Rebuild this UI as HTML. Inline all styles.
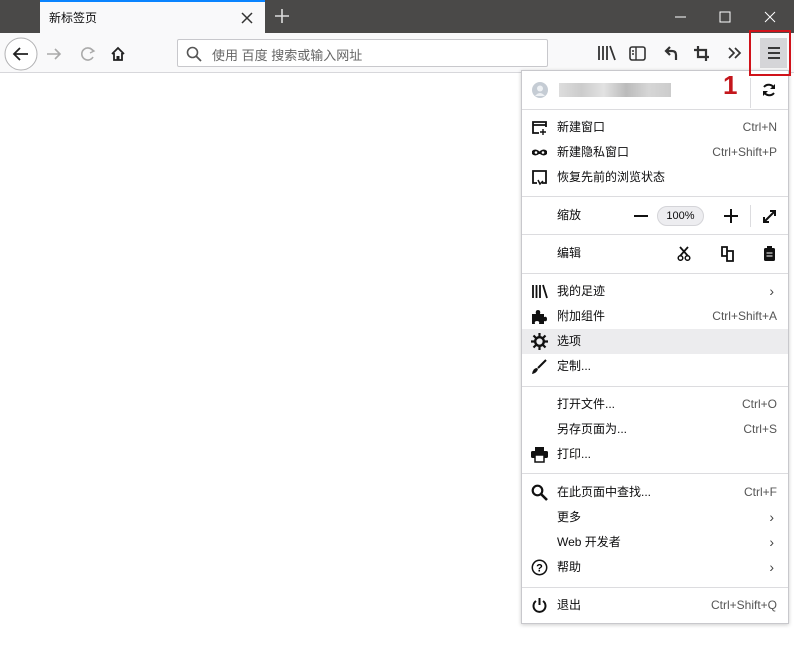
<!DOCTYPE html>
<html><head><meta charset="utf-8"><style>
*{margin:0;padding:0;box-sizing:border-box}
body{width:794px;height:647px;overflow:hidden;background:#fff;font-family:"Liberation Sans","Noto Sans CJK SC",sans-serif;font-size:12px;color:#0c0c0d;position:relative}
.abs{position:absolute}
#title{left:0;top:0;width:794px;height:33px;background:#4a4948}
#tab{left:40px;top:0;width:225px;height:33px;background:#f9f9fa;border-top:2px solid #0a84ff}
#tb{left:0;top:33px;width:794px;height:40px;background:#f9f9fa;border-bottom:1px solid #d7d7db}
#url{left:177px;top:39px;width:371px;height:28px;background:#fff;border:1px solid #c8c8cc;border-radius:2px}
#panel{left:521px;top:70px;width:268px;height:554px;background:#fff;border:1px solid #c8c8cc;box-shadow:0 1px 4px rgba(0,0,0,.2)}
.sep{position:absolute;left:0;width:266px;height:1px;background:#dcdcdf}
.row{position:absolute;left:0;width:266px;height:25px;line-height:25px}
.row .t{position:absolute;left:35px}
.row .k{position:absolute;right:11px;color:#555}
.row .ic{position:absolute;left:9px;top:4px;width:17px;height:17px}
.chev{position:absolute;right:14px;color:#444;font-size:14px}
</style></head><body>
<div class="abs" id="title"></div>
<div class="abs" id="tab"><span class="abs" style="left:9px;top:7px;font-size:12px">新标签页</span>
<svg class="abs" style="left:201px;top:10px" width="12" height="12"><path d="M1 1L11 11M11 1L1 11" stroke="#333" stroke-width="1.5"/></svg></div>
<svg class="abs" style="left:274px;top:8px" width="16" height="16"><path d="M8 1V15M1 8H15" stroke="#ddd" stroke-width="1.6"/></svg>
<svg class="abs" style="left:674px;top:10px" width="110" height="14"><path d="M1 7H12" stroke="#fff"/><path d="M46 2h10v10h-10z" fill="none" stroke="#fff"/><path d="M91 2L101 12M101 2L91 12" stroke="#fff"/></svg>
<div class="abs" id="tb"></div>
<svg class="abs" style="left:4px;top:37px" width="130" height="34">
<circle cx="17" cy="17" r="16" fill="#fff" stroke="#b1b1b3"/>
<path d="M10 17H24M16 11L10 17L16 23" fill="none" stroke="#222" stroke-width="1.8"/>
<path d="M43 17H56M51 12L56 17L51 22" fill="none" stroke="#aaa" stroke-width="1.6"/>
<path d="M89 14A6 6 0 1 0 89 20" fill="none" stroke="#aaa" stroke-width="1.6"/><path d="M86 11L90 14L86 16" fill="none" stroke="#aaa" stroke-width="1.4"/>
<path d="M108 17L114 11L120 17M110 16V23H118V16" fill="none" stroke="#222" stroke-width="1.8"/><rect x="112.5" y="19" width="3" height="4" fill="#222"/>
</svg>
<div class="abs" id="url"><svg class="abs" style="left:8px;top:6px" width="16" height="16"><circle cx="6.5" cy="6.5" r="5" fill="none" stroke="#555" stroke-width="1.6"/><path d="M10 10L15 15" stroke="#555" stroke-width="1.8"/></svg><span class="abs" style="left:34px;top:5px;color:#666;font-size:13px">使用 百度 搜索或输入网址</span></div>
<svg class="abs" style="left:596px;top:42px" width="155" height="22">
<path d="M3 4V18M7 4V18M11 4V18M14 4L19 18" stroke="#333" stroke-width="1.8" fill="none"/>
<rect x="34" y="5" width="15" height="13" rx="2" fill="none" stroke="#333" stroke-width="1.6"/><path d="M40 5V18M36 9H38M36 12H38" stroke="#333" stroke-width="1.4"/>
<path d="M80 18V13Q80 9 76 9H70M74 5L70 9L74 13" fill="none" stroke="#333" stroke-width="2.2"/>
<path d="M102 4V15H113M98 8H110V19" fill="none" stroke="#333" stroke-width="2.2"/>
<path d="M133 6L138 11L133 16M139 6L144 11L139 16" fill="none" stroke="#333" stroke-width="1.7"/>
</svg>
<div class="abs" style="left:760px;top:38px;width:27px;height:30px;background:#d5d5d8"></div>
<svg class="abs" style="left:766px;top:45px" width="16" height="16"><path d="M2 3H14M2 8H14M2 13H14" stroke="#222" stroke-width="1.8"/></svg>
<div class="abs" id="panel">
<svg class="abs" style="left:10px;top:11px" width="16" height="16"><circle cx="8" cy="8" r="8" fill="#c5ccd4"/><circle cx="8" cy="6.5" r="3" fill="#eef1f4"/><path d="M3 14Q8 8 13 14" fill="#eef1f4"/></svg>
<div class="abs" style="left:37px;top:12px;width:112px;height:14px;background:linear-gradient(90deg,#ddd,#ccc 20%,#e2e2e2 40%,#bbb 60%,#d6d6d6 80%,#ccc)"></div>
<span class="abs" style="left:201px;top:-1px;color:#c4161c;font-size:26px;font-weight:bold">1</span>
<div class="abs" style="left:228px;top:7px;width:1px;height:30px;background:#dcdcdf"></div>
<svg class="abs" style="left:239px;top:11px" width="16" height="16"><path d="M13 6A6 6 0 0 0 3 5M3 10A6 6 0 0 0 13 11" fill="none" stroke="#111" stroke-width="2"/><path d="M14 2V7H9M2 14V9H7" fill="#111"/></svg>
<div class="sep" style="top:38px"></div>
<div class="row" style="top:44px"><svg class="ic" viewBox="0 0 17 17"><path d="M8 14H2V3H15V8M2 6H15" fill="none" stroke="#111" stroke-width="1.8"/><path d="M12 10V16M9 13H15" stroke="#111" stroke-width="1.4"/></svg><span class="t">新建窗口</span><span class="k">Ctrl+N</span></div>
<div class="row" style="top:69px"><svg class="ic" viewBox="0 0 17 17"><path d="M1 7Q4 4 8 7Q9 8 9 7Q13 4 16 7V10Q13 13 9 10H8Q4 13 1 10Z" fill="#111"/><circle cx="5" cy="8.5" r="1.3" fill="#fff"/><circle cx="12" cy="8.5" r="1.3" fill="#fff"/></svg><span class="t">新建隐私窗口</span><span class="k">Ctrl+Shift+P</span></div>
<div class="row" style="top:94px"><svg class="ic" viewBox="0 0 17 17"><path d="M6 14H2V2H15V14H11" fill="none" stroke="#111" stroke-width="1.8"/><path d="M7 11L9 15L12 12" fill="none" stroke="#111" stroke-width="1.5"/></svg><span class="t">恢复先前的浏览状态</span></div>
<div class="sep" style="top:125px"></div>
<div class="row" style="top:132px"><span class="t">缩放</span>
<svg class="abs" style="left:112px;top:12px" width="14" height="2"><rect width="14" height="2" fill="#111"/></svg>
<div class="abs" style="left:135px;top:3px;width:47px;height:20px;border-radius:10px;background:#ededf0;border:1px solid #d4d4d8;text-align:center;line-height:18px;font-size:11px">100%</div>
<svg class="abs" style="left:202px;top:6px" width="14" height="14"><path d="M7 0V14M0 7H14" stroke="#111" stroke-width="2"/></svg>
<div class="abs" style="left:228px;top:2px;width:1px;height:22px;background:#dcdcdf"></div>
<svg class="abs" style="left:240px;top:6px" width="15" height="15"><path d="M2 13L13 2M8 2H13V7M2 8V13H7" fill="none" stroke="#111" stroke-width="2"/></svg></div>
<div class="sep" style="top:163px"></div>
<div class="row" style="top:170px"><span class="t">编辑</span>
<svg class="abs" style="left:155px;top:5px" width="14" height="15"><path d="M3 1L11 10M11 1L3 10" stroke="#111" stroke-width="1.8"/><circle cx="3.5" cy="12" r="2.3" fill="none" stroke="#111" stroke-width="1.5"/><circle cx="10.5" cy="12" r="2.3" fill="none" stroke="#111" stroke-width="1.5"/></svg>
<svg class="abs" style="left:198px;top:5px" width="15" height="16"><path d="M2 1H7V10H2Z M7 5H13V15H7Z" fill="none" stroke="#111" stroke-width="1.8"/></svg>
<svg class="abs" style="left:241px;top:4px" width="13" height="17"><rect x="1" y="3" width="11" height="13" rx="1.5" fill="#111"/><rect x="4" y="1" width="5" height="3" fill="#111"/><path d="M3.5 8H9.5M3.5 11H9.5" stroke="#fff"/></svg></div>
<div class="sep" style="top:202px"></div>
<div class="row" style="top:208px"><svg class="ic" viewBox="0 0 17 17"><path d="M2 2V15M5.5 2V15M9 2V15M12 2L16 15" stroke="#111" stroke-width="1.8"/></svg><span class="t">我的足迹</span><span class="chev">›</span></div>
<div class="row" style="top:233px"><svg class="ic" viewBox="0 0 17 17"><path d="M1 6H5Q4 2 7 2Q10 2 9 6H13V9Q16 8 16 11Q16 14 13 13V16H8Q9 13 6 13Q3 13 4 16H1Z" fill="#111"/></svg><span class="t">附加组件</span><span class="k">Ctrl+Shift+A</span></div>
<div class="row" style="top:258px;background:#ececee"><svg class="ic" viewBox="0 0 17 17"><circle cx="8.5" cy="8.5" r="4.3" fill="none" stroke="#111" stroke-width="2.4"/><path d="M8.5 0V4M8.5 13V17M0 8.5H4M13 8.5H17M2.5 2.5L5 5M12 12L14.5 14.5M14.5 2.5L12 5M5 12L2.5 14.5" stroke="#111" stroke-width="2.2"/></svg><span class="t">选项</span></div>
<div class="row" style="top:283px"><svg class="ic" viewBox="0 0 17 17"><path d="M15 2L7 10" stroke="#111" stroke-width="2"/><path d="M6 10Q2 10 1 16Q6 15 7 11Z" fill="#111"/></svg><span class="t">定制...</span></div>
<div class="sep" style="top:315px"></div>
<div class="row" style="top:321px"><span class="t">打开文件...</span><span class="k">Ctrl+O</span></div>
<div class="row" style="top:346px"><span class="t">另存页面为...</span><span class="k">Ctrl+S</span></div>
<div class="row" style="top:371px"><svg class="ic" viewBox="0 0 17 17"><rect x="4" y="1" width="9" height="4" fill="#111"/><rect x="0" y="5" width="17" height="7" rx="1.5" fill="#111"/><rect x="4" y="9" width="9" height="7" fill="#fff" stroke="#111" stroke-width="1.5"/></svg><span class="t">打印...</span></div>
<div class="sep" style="top:402px"></div>
<div class="row" style="top:409px"><svg class="ic" viewBox="0 0 17 17"><circle cx="6.5" cy="6.5" r="4.8" fill="none" stroke="#111" stroke-width="2.2"/><path d="M10 10L16 16" stroke="#111" stroke-width="2.6"/></svg><span class="t">在此页面中查找...</span><span class="k">Ctrl+F</span></div>
<div class="row" style="top:434px"><span class="t">更多</span><span class="chev">›</span></div>
<div class="row" style="top:459px"><span class="t">Web 开发者</span><span class="chev">›</span></div>
<div class="row" style="top:484px"><svg class="ic" viewBox="0 0 17 17"><circle cx="8.5" cy="8.5" r="7.2" fill="none" stroke="#111" stroke-width="1.5"/><text x="8.5" y="12.5" font-size="11" font-weight="bold" text-anchor="middle" font-family="Liberation Sans">?</text></svg><span class="t">帮助</span><span class="chev">›</span></div>
<div class="sep" style="top:516px"></div>
<div class="row" style="top:522px"><svg class="ic" viewBox="0 0 17 17"><path d="M5 4A6 6 0 1 0 12 4" fill="none" stroke="#111" stroke-width="2"/><path d="M8.5 1V8" stroke="#111" stroke-width="2"/></svg><span class="t">退出</span><span class="k">Ctrl+Shift+Q</span></div>
</div>
<div class="abs" style="left:749px;top:30px;width:42px;height:46px;border:2px solid #d0121a"></div>
</body></html>
